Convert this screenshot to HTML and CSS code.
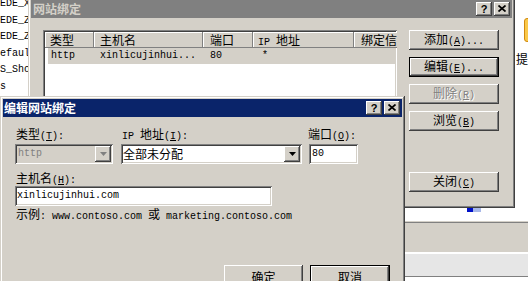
FILE: index.html
```html
<!DOCTYPE html>
<html lang="zh-CN">
<head>
    <meta charset="UTF-8">
    <meta name="viewport" content="width=device-width, initial-scale=1.0">
    <title>编辑网站绑定</title>
    <link rel="stylesheet" href="styles.css">
</head>
<body>
    <div class="desk">
        <!-- tree pane behind the dialogs -->
        <div class="tree">
            <div class="m">EDE_X</div>
            <div class="m">EDE_Z</div>
            <div class="m">EDE_Z</div>
            <div class="m">efaul</div>
            <div class="m">S_Sho</div>
            <div class="m">s</div>
            <div class="m">I_LBB</div>
        </div>

        <div class="side">
            <div class="side-icon"></div>
            <div class="side-text">提</div>
        </div>

        <div class="under">
            <div class="under-white"><span class="thumb"></span></div>
            <div class="under-gray"></div>
            <div class="under-light"></div>
        </div>

        <!-- Site bindings dialog (inactive) -->
        <div class="win back">
            <div class="titlebar inactive">
                <span class="title">网站绑定</span>
                <div class="caps">
                    <span class="cap">?</span>
                    <span class="cap">
                        <svg width="8" height="7" viewBox="0 0 8 7"><path d="M0.5 0.5 L7.5 6.5 M7.5 0.5 L0.5 6.5" stroke="#000" stroke-width="1.7"/></svg>
                    </span>
                </div>
            </div>
            <div class="back-body">
                <div class="listview">
                    <div class="lv-head">
                        <div class="lv-col c1">类型</div>
                        <div class="lv-col c2">主机名</div>
                        <div class="lv-col c3">端口</div>
                        <div class="lv-col c4"><span class="m">IP </span>地址</div>
                        <div class="lv-col c5">绑定信息</div>
                    </div>
                    <div class="lv-row">
                        <div class="cell c1 m">http</div>
                        <div class="cell c2 m">xinlicujinhui...</div>
                        <div class="cell c3 m">80</div>
                        <div class="cell c4 m">*</div>
                        <div class="cell c5"></div>
                    </div>
                </div>
                <div class="side-buttons">
                    <button class="btn">添加<span class="m">(<u>A</u>)...</span></button>
                    <button class="btn default">编辑<span class="m">(<u>E</u>)...</span></button>
                    <button class="btn disabled">删除<span class="m">(<u>R</u>)</span></button>
                    <button class="btn">浏览<span class="m">(<u>B</u>)</span></button>
                    <button class="btn close">关闭<span class="m">(<u>C</u>)</span></button>
                </div>
            </div>
        </div>

        <!-- Edit binding dialog (active) -->
        <div class="win front">
            <div class="titlebar">
                <span class="title">编辑网站绑定</span>
                <div class="caps">
                    <span class="cap">?</span>
                    <span class="cap">
                        <svg width="8" height="7" viewBox="0 0 8 7"><path d="M0.5 0.5 L7.5 6.5 M7.5 0.5 L0.5 6.5" stroke="#000" stroke-width="1.7"/></svg>
                    </span>
                </div>
            </div>
            <div class="front-body">
                <div class="fields">
                    <div class="field f-type">
                        <label>类型<span class="m">(<u>T</u>):</span></label>
                        <div class="combo disabled">
                            <span class="m">http</span>
                            <span class="drop">
                                <svg width="7" height="4" viewBox="0 0 7 4"><polygon points="0,0 7,0 3.5,4" fill="#808080"/></svg>
                            </span>
                        </div>
                    </div>
                    <div class="field f-ip">
                        <label><span class="m">IP </span>地址<span class="m">(<u>I</u>):</span></label>
                        <div class="combo">
                            <span>全部未分配</span>
                            <span class="drop">
                                <svg width="7" height="4" viewBox="0 0 7 4"><polygon points="0,0 7,0 3.5,4" fill="#000"/></svg>
                            </span>
                        </div>
                    </div>
                    <div class="field f-port">
                        <label>端口<span class="m">(<u>O</u>):</span></label>
                        <div class="textbox m">80</div>
                    </div>
                </div>

                <label class="host-label">主机名<span class="m">(<u>H</u>):</span></label>
                <div class="textbox host m">xinlicujinhui.com</div>
                <div class="example">示例<span class="m">: www.contoso.com </span>或<span class="m"> marketing.contoso.com</span></div>

                <div class="dlg-buttons">
                    <button class="btn ok">确定</button>
                    <button class="btn default cancel">取消</button>
                </div>
            </div>
        </div>
    </div>
</body>
</html>
```

FILE: styles.css
```css
/* Windows classic colours */
:root {
    --face: #d4d0c8;
    --shadow: #808080;
    --dark: #404040;
    --navy: #0a246a;
}

body {
    margin: 0;
    padding: 0;
    background-color: #fff;
    font-family: "Noto Sans CJK SC", sans-serif;
    font-size: 12px;
    line-height: 14px;
    color: #000;
}

.desk {
    position: relative;
    width: 528px;
    height: 281px;
    overflow: hidden;
}

.m {
    font-family: "Liberation Mono", monospace;
    font-size: 10px;
}

/* background panes */
.tree {
    position: absolute;
    left: 0;
    top: -4px;
    width: 28px;
    height: 100px;
    overflow: hidden;
    background-color: #fff;
    line-height: 16.5px;
}

.tree div {
    white-space: nowrap;
}

.side {
    position: absolute;
    left: 514px;
    top: 0;
    width: 14px;
    height: 207px;
}

.side-icon {
    margin: 18px 0 0 10px;
    width: 10px;
    height: 22px;
    background-color: #fbc94a;
    border: 1px solid #d08a10;
    border-radius: 3px;
}

.side-text {
    margin: 10px 0 0 2px;
}

.under {
    position: absolute;
    left: 400px;
    top: 205px;
    width: 128px;
    height: 76px;
    display: flex;
    flex-direction: column;
}

.under-white {
    height: 17px;
    background-color: #fff;
    border-bottom: 1px solid var(--shadow);
    box-shadow: inset 0 -11px 0 -10px var(--face);
    position: relative;
}

.thumb {
    position: absolute;
    left: 67px;
    top: 0;
    width: 14px;
    height: 7px;
    background-color: #a8b8e8;
    box-shadow: inset 6px 0 0 #0010c8;
}

.under-gray {
    height: 29px;
    background-color: var(--face);
    border-bottom: 2px solid #fff;
}

.under-light {
    height: 22px;
    background-color: #e6e6e6;
    border-bottom: 1px solid var(--shadow);
}

/* windows */
.win {
    position: absolute;
    box-sizing: border-box;
    padding: 3px;
    background-color: var(--face);
    box-shadow: inset -1px -1px var(--dark), inset 1px 1px var(--face),
                inset -2px -2px var(--shadow), inset 2px 2px #fff;
    overflow: hidden;
}

.back {
    left: 28px;
    top: -3px;
    width: 487px;
    height: 211px;
}

.front {
    left: 0;
    top: 96px;
    width: 405px;
    height: 200px;
}

.titlebar {
    height: 18px;
    display: flex;
    align-items: center;
    justify-content: space-between;
    padding: 0 2px 0 1px;
    background-color: var(--navy);
    color: #fff;
    font-weight: bold;
}

.titlebar.inactive {
    background-color: var(--shadow);
    color: var(--face);
    padding-left: 2px;
}

.caps {
    display: flex;
    gap: 2px;
}

.cap {
    width: 16px;
    height: 14px;
    box-sizing: border-box;
    display: flex;
    align-items: center;
    justify-content: center;
    background-color: var(--face);
    box-shadow: inset -1px -1px var(--dark), inset 1px 1px #fff, inset -2px -2px var(--shadow);
    color: #000;
    font-family: "Liberation Sans", sans-serif;
    font-size: 11px;
    font-weight: bold;
    padding-bottom: 1px;
}

/* back dialog */
.back-body {
    display: flex;
    gap: 12px;
    padding: 12px 0 0 12px;
}

.listview {
    width: 354px;
    height: 180px;
    box-sizing: border-box;
    padding: 2px;
    background-color: #fff;
    box-shadow: inset 1px 1px var(--shadow), inset -1px -1px #fff,
                inset 2px 2px var(--dark), inset -2px -2px var(--face);
    overflow: hidden;
}

.lv-head {
    display: flex;
    height: 16px;
    white-space: nowrap;
}

.lv-col {
    box-sizing: border-box;
    height: 16px;
    padding-left: 5px;
    line-height: 16px;
    background-color: var(--face);
    box-shadow: inset -1px -1px var(--shadow), inset 1px 1px #fff;
    flex-shrink: 0;
}

.lv-head .c1 { width: 49px; }
.lv-head .c2 { width: 109px; padding-left: 6px; }
.lv-head .c3 { width: 50px; padding-left: 7px; }
.lv-head .c4 { width: 101px; }
.lv-head .c5 { width: 60px; padding-left: 7px; }

.lv-row {
    display: flex;
    height: 16px;
    line-height: 16px;
    margin-left: 3px;
    background-color: var(--face);
    white-space: nowrap;
}

.cell {
    box-sizing: border-box;
    flex-shrink: 0;
}

.lv-row .c1 { width: 46px; padding-left: 3px; }
.lv-row .c2 { width: 109px; padding-left: 6px; }
.lv-row .c3 { width: 50px; padding-left: 7px; }
.lv-row .c4 { width: 101px; padding-left: 9px; }
.lv-row .c5 { flex: 1; }

.side-buttons {
    width: 90px;
    display: flex;
    flex-direction: column;
    gap: 7px;
}

.btn {
    height: 20px;
    box-sizing: border-box;
    padding: 0;
    border: none;
    background-color: var(--face);
    box-shadow: inset -1px -1px var(--dark), inset 1px 1px #fff, inset -2px -2px var(--shadow);
    font-family: "Noto Sans CJK SC", sans-serif;
    font-size: 12px;
    line-height: 14px;
    color: #000;
    white-space: nowrap;
}

.btn.default {
    border: 1px solid #000;
}

.btn.disabled {
    color: var(--shadow);
    text-shadow: 1px 1px #fff;
}

.btn.close {
    margin-top: 34px;
}

/* front dialog */
.front-body {
    padding: 10px 12px 0 12px;
}

.fields {
    display: flex;
    gap: 8px;
}

.field {
    display: flex;
    flex-direction: column;
    gap: 3px;
}

.field label,
.host-label {
    padding-left: 1px;
    height: 14px;
    white-space: nowrap;
}

.f-type { width: 98px; }
.f-ip { width: 181px; }
.f-port { width: 49px; margin-left: -1px; }

.f-port label {
    margin-left: -2px;
}

.combo,
.textbox {
    height: 20px;
    box-sizing: border-box;
    padding: 2px 2px 2px 3px;
    background-color: #fff;
    box-shadow: inset 1px 1px var(--shadow), inset -1px -1px #fff,
                inset 2px 2px var(--dark), inset -2px -2px var(--face);
    display: flex;
    align-items: center;
    white-space: nowrap;
}

.combo {
    justify-content: space-between;
    padding-left: 2px;
}

.combo.disabled {
    background-color: var(--face);
    color: var(--shadow);
}

.combo.disabled .m {
    padding-left: 1px;
}

.drop {
    width: 16px;
    height: 16px;
    display: flex;
    align-items: center;
    justify-content: center;
    background-color: var(--face);
    box-shadow: inset -1px -1px var(--dark), inset 1px 1px #fff, inset -2px -2px var(--shadow);
}

.host-label {
    display: block;
    margin-top: 7px;
}

.textbox.host {
    width: 257px;
    margin-top: 1px;
    padding-left: 2px;
}

.example {
    margin-top: 1px;
    padding-left: 1px;
    white-space: nowrap;
}

.dlg-buttons {
    display: flex;
    justify-content: flex-end;
    gap: 7px;
    margin-top: 41px;
}

.dlg-buttons .btn {
    height: 23px;
}

.btn.ok { width: 79px; }
.btn.cancel { width: 80px; }
```
